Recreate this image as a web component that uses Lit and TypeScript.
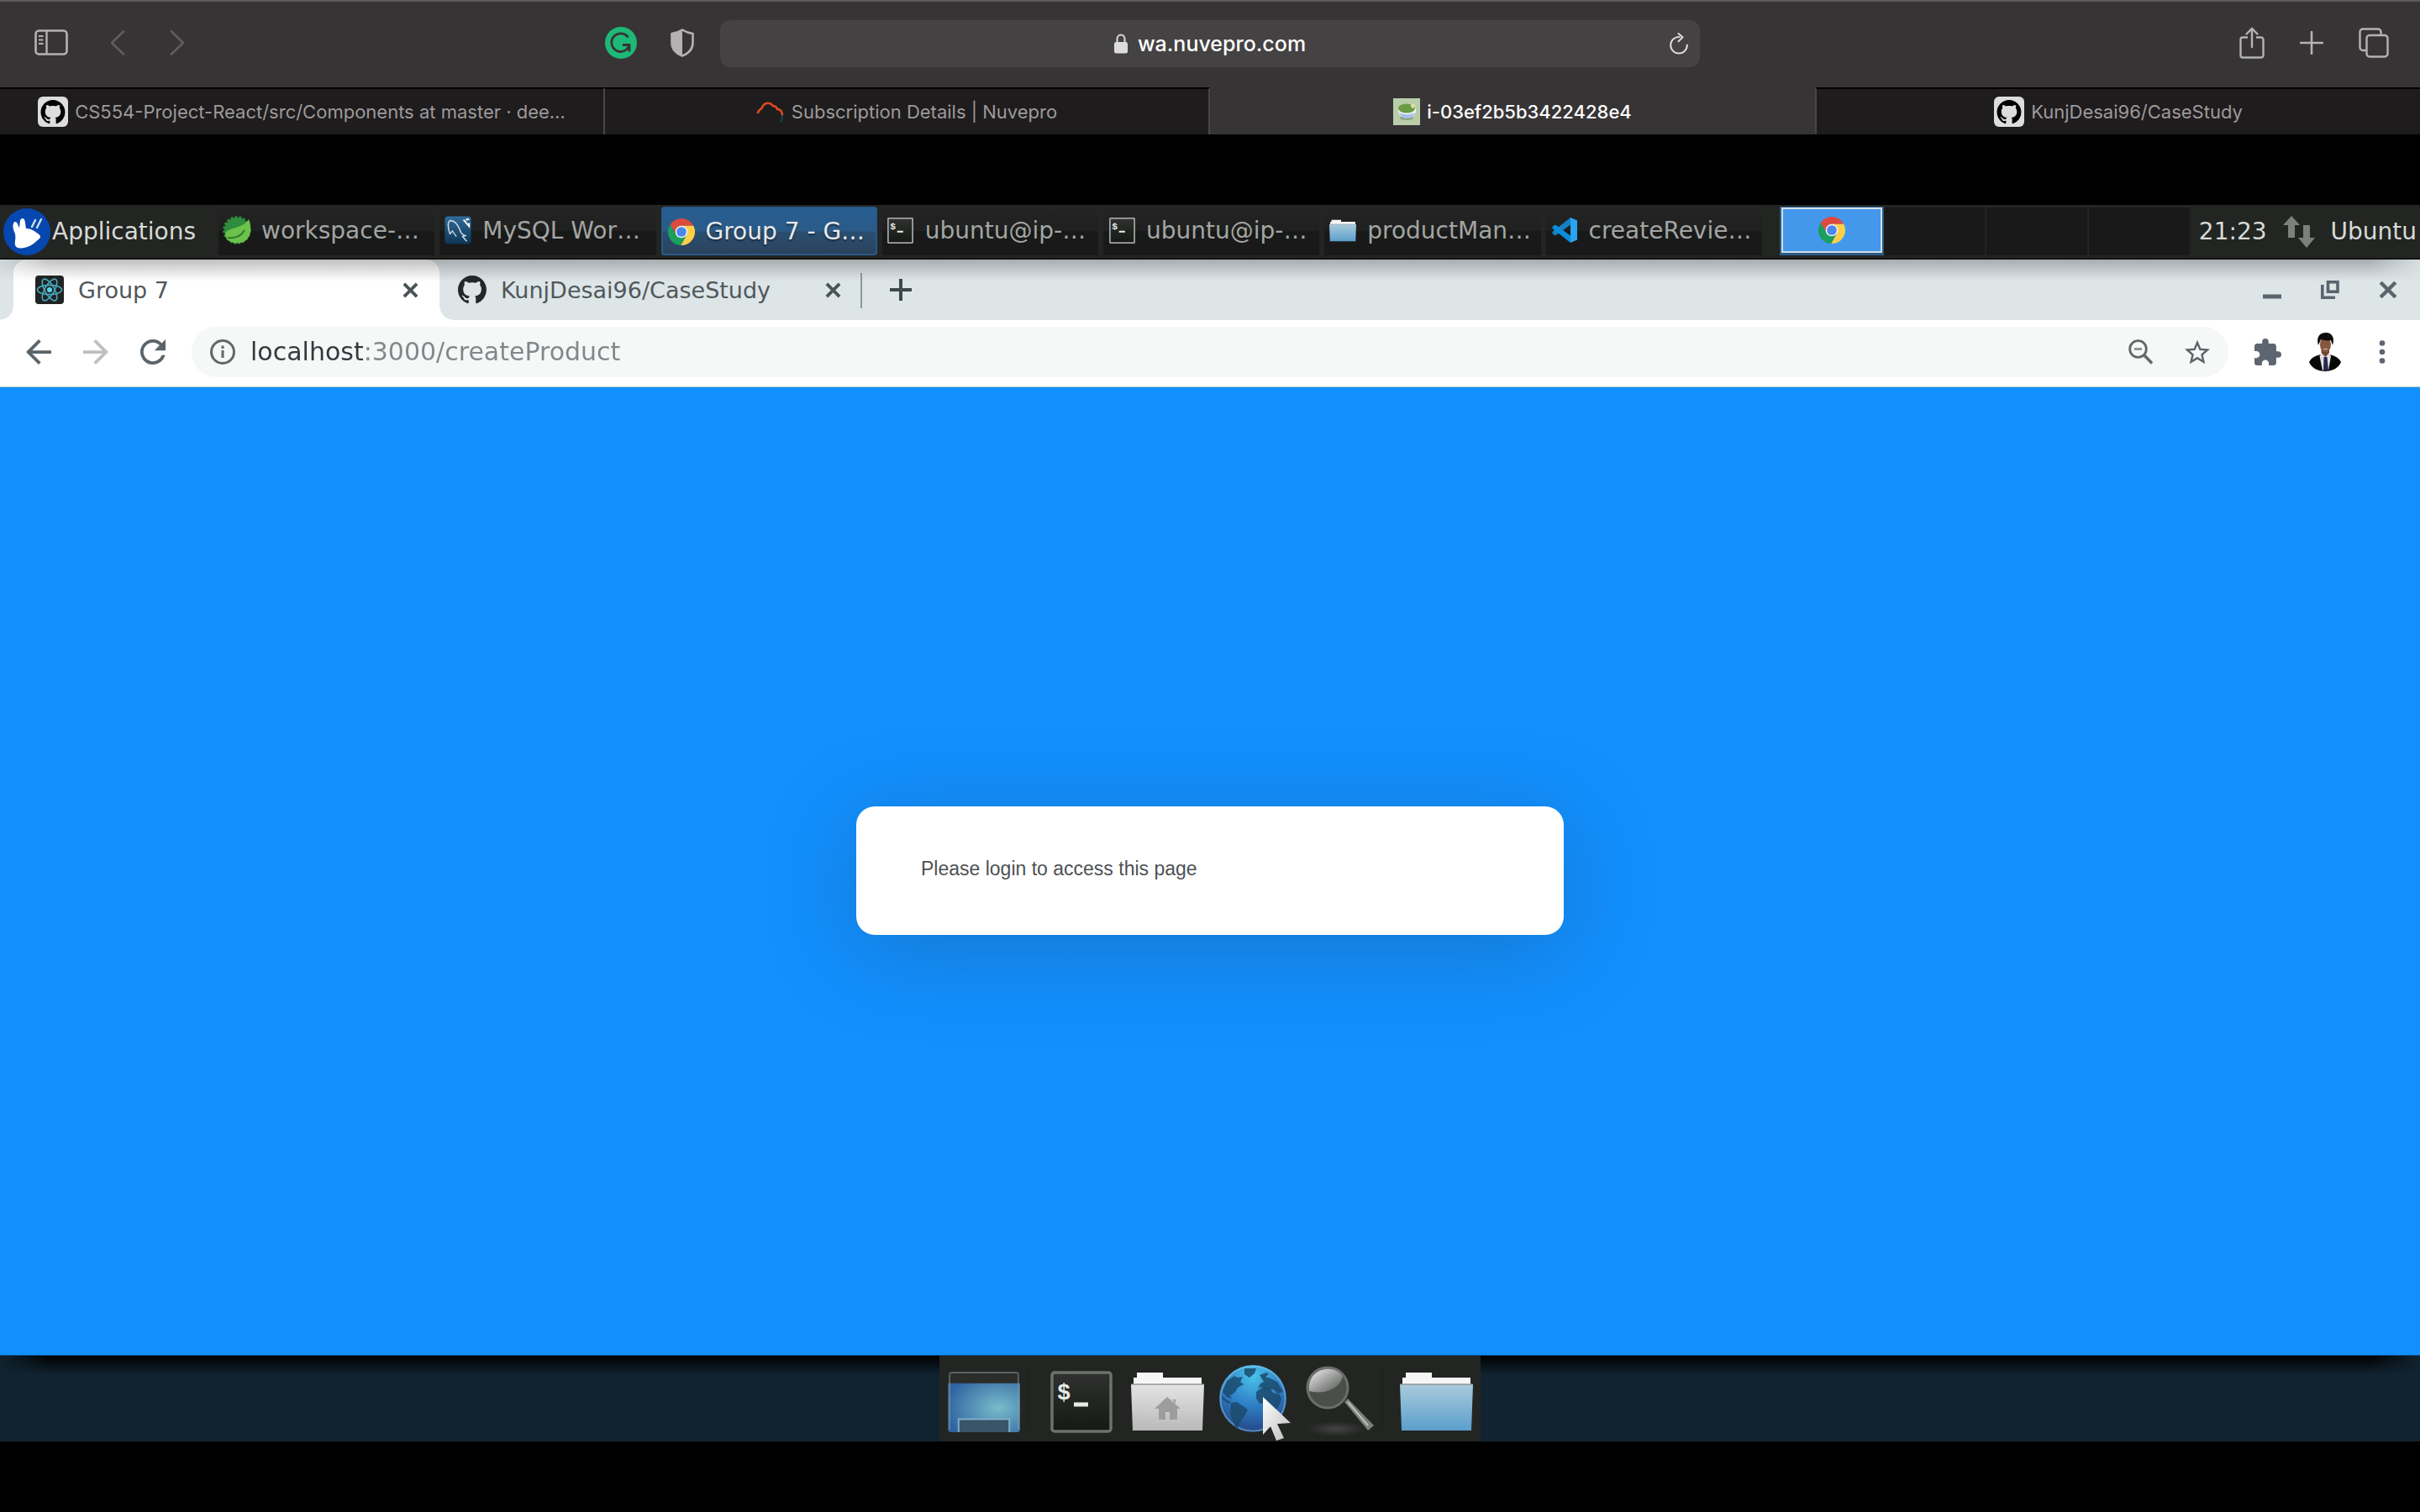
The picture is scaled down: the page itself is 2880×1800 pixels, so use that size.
import { LitElement, html, css, svg, TemplateResult } from "lit";
import { customElement } from "lit/decorators.js";
import { classMap } from "lit/directives/class-map.js";

const icon = (w: number, h: number, box: string, body: unknown) =>
  html`<svg class="icon" width=${w} height=${h} viewBox=${box} fill="none" aria-hidden="true">${body}</svg>`;

const OCTOCAT =
  "M8 0C3.58 0 0 3.58 0 8c0 3.54 2.29 6.53 5.47 7.59.4.07.55-.17.55-.38 0-.19-.01-.82-.01-1.49-2.01.37-2.53-.49-2.69-.94-.09-.23-.48-.94-.82-1.13-.28-.15-.68-.52-.01-.53.63-.01 1.08.58 1.23.82.72 1.21 1.87.87 2.33.66.07-.52.28-.87.51-1.07-1.78-.2-3.64-.89-3.64-3.95 0-.87.31-1.59.82-2.15-.08-.2-.36-1.02.08-2.12 0 0 .67-.21 2.2.82.64-.18 1.32-.27 2-.27.68 0 1.36.09 2 .27 1.53-1.04 2.2-.82 2.2-.82.44 1.1.16 1.92.08 2.12.51.56.82 1.27.82 2.15 0 3.07-1.87 3.75-3.65 3.95.29.25.54.73.54 1.48 0 1.07-.01 1.93-.01 2.2 0 .21.15.46.55.38A8.013 8.013 0 0 0 16 8c0-4.42-3.58-8-8-8z";

/* Safari toolbar */
const sidebar = icon(40, 32, "0 0 40 32", svg`
  <rect x="1.500" y="1.500" width="37" height="28" rx="4" stroke="#b4b2b3" stroke-width="2.600"/>
  <path d="M14.500 2V30" stroke="#b4b2b3" stroke-width="2.400"/>
  <path d="M5 8h5.500M5 12.500h5.500M5 17h5.500" stroke="#b4b2b3" stroke-width="2"/>`);
const chevronLeft = icon(18, 30, "0 0 18 30", svg`<path d="M16 1.500L2 15l14 13.500" stroke="#5f5d5e" stroke-width="2.600" stroke-linecap="round" stroke-linejoin="round"/>`);
const chevronRight = icon(18, 30, "0 0 18 30", svg`<path d="M2 1.500L16 15 2 28.500" stroke="#5f5d5e" stroke-width="2.600" stroke-linecap="round" stroke-linejoin="round"/>`);
const grammarly = icon(38, 38, "0 0 38 38", svg`
  <circle cx="19" cy="19" r="19" fill="#1eb877"/>
  <path d="M27.500 12.500A10.800 10.800 0 1 0 28.500 23" stroke="#363334" stroke-width="2.800"/>
  <path d="M21 21.500h8v8" stroke="#363334" stroke-width="2.800"/>`);
const shield = icon(28, 34, "0 0 28 34", svg`
  <path d="M14 1.500C10 4 6 5.500 1.500 6v11c0 7.500 5 12.500 12.500 15.500C21.500 29.500 26.500 24.500 26.500 17V6C22 5.500 18 4 14 1.500z" stroke="#b4b2b3" stroke-width="2.600" stroke-linejoin="round"/>
  <path d="M14 1.500C10 4 6 5.500 1.500 6v11c0 7.500 5 12.500 12.500 15.500z" fill="#b4b2b3"/>`);
const lock = icon(16, 24, "0 0 16 24", svg`
  <rect y="10" width="16" height="13.500" rx="2.500" fill="#dddcdc"/>
  <path d="M3.500 11V6.500a4.500 5 0 0 1 9 0V11" stroke="#dddcdc" stroke-width="2"/>`);
const reload = icon(24, 26, "0 0 24 26", svg`
  <path d="M12.500 5A9.800 9.800 0 1 0 21.800 14.500" stroke="#dddcdc" stroke-width="2" stroke-linecap="round"/>
  <path d="M11.500 1l5 4.200-5 5" stroke="#dddcdc" stroke-width="2" stroke-linecap="round" stroke-linejoin="round"/>`);
const share = icon(30, 38, "0 0 30 38", svg`
  <path d="M10 12.500H4a2.500 2.500 0 0 0-2.500 2.500v19A2.500 2.500 0 0 0 4 36.500h22a2.500 2.500 0 0 0 2.500-2.500V15a2.500 2.500 0 0 0-2.500-2.500h-6" stroke="#b4b2b3" stroke-width="2.400"/>
  <path d="M15 24V2M8.500 8.500L15 1.800l6.500 6.700" stroke="#b4b2b3" stroke-width="2.400" stroke-linecap="round" stroke-linejoin="round"/>`);
const plusThin = icon(28, 28, "0 0 28 28", svg`<path d="M14 1v26M1 14h26" stroke="#b4b2b3" stroke-width="2.600" stroke-linecap="round"/>`);
const overview = icon(36, 36, "0 0 36 36", svg`
  <path d="M9.500 27H5a3.500 3.500 0 0 1-3.500-3.500V5A3.500 3.500 0 0 1 5 1.500h18A3.500 3.500 0 0 1 26.500 5v4" stroke="#b4b2b3" stroke-width="2.400"/>
  <rect x="9.500" y="9" width="25" height="25.500" rx="3.500" stroke="#b4b2b3" stroke-width="2.400"/>`);

/* Safari favicons */
const githubTile = icon(36, 36, "0 0 36 36", svg`
  <rect width="36" height="36" rx="6" fill="#dddddd"/>
  <g transform="translate(3.500 4) scale(1.810)"><path d=${OCTOCAT} fill="#000"/></g>`);
const nuvepro = icon(34, 26, "0 0 34 26", svg`
  <path d="M2 15c0-5 4-4 5-7 2-6 9-7 13-2 2 1 4 0 5 4 5 0 6 4 6 8" stroke="#dc4a22" stroke-width="2.600"/>
  <path d="M31 17c0 3 0 5-2 8" stroke="#123f50" stroke-width="2.400"/>`);
const cup = icon(32, 32, "0 0 32 32", svg`
  <rect width="32" height="32" fill="#b9cda9"/>
  <ellipse cx="16" cy="23.500" rx="8" ry="2.500" fill="#8aa07c"/>
  <path d="M6 12h21c1 7-4 12-10.500 12S5 19 6 12z" fill="#eef3fb"/>
  <path d="M7 17c5 3 14 3 19 0-2 5-5 7-9.500 7S9 22 7 17z" fill="#a7c0e6"/>
  <ellipse cx="16" cy="12" rx="10" ry="5.500" fill="#6a9c42"/>
  <ellipse cx="23.500" cy="9" rx="2.500" ry="2.800" fill="#e6d8a4"/>`);

/* Xfce panel */
const xfce = icon(56, 56, "0 0 56 56", svg`
  <circle cx="28" cy="28" r="28" fill="#0647b0"/>
  <path d="M13 28c-3-7-1-12 1-12 3 0 3 4 5 7 1-6 0-11 4-11 3 0 3 6 4 12 6 0 10 3 14 6 3 2 4 4 2 6-4 3-6 6-12 9-7 3-15 4-17-1-1-4 2-10-1-16z" fill="#fff"/>
  <path d="M34 22l4-8M40 23l5-10" stroke="#cddaf0" stroke-width="2.500" stroke-linecap="round"/>`);
const spring = icon(34, 34, "0 0 34 34", svg`
  <circle cx="17" cy="17" r="15" fill="#2f8c3c"/>
  <circle cx="17" cy="17" r="15.500" stroke="#2f8c3c" stroke-width="2.500" stroke-dasharray="3 2"/>
  <path d="M31 4c5 12 2 26-10 28C11 34 3 29 3 21c3-8 21-5 28-17z" fill="#6cc24a"/>
  <path d="M6 26c9 1 16-2 20-9" stroke="#2c7a2c" stroke-width="2"/>`);
const mysql = icon(34, 34, "0 0 34 36", svg`
  <defs><linearGradient id="my" x2="0" y2="1"><stop stop-color="#2f6d9c"/><stop offset="1" stop-color="#0f3553"/></linearGradient></defs>
  <rect x=".5" y=".5" width="33" height="35" rx="4" fill="url(#my)"/>
  <path d="M7 23c-3-8-3-16 0-17 7 0 10 6 13 13 1 3 3 5 6 6l-3 1 5 6" stroke="#c7d6e2" stroke-width="1.700"/>
  <path d="M7 23l3-4 5 7" stroke="#c7d6e2" stroke-width="1.500"/>
  <path d="M24 5l7 8V9M31 4l-4 1" stroke="#fff" stroke-width="2"/>`);
const chrome = icon(32, 32, "4 4 40 40", svg`
  <path d="M24 15H41.860A20 20 0 0 0 7.280 13.030L16.200 28.500z" fill="#dd4b3e"/>
  <path d="M24 15H41.860A20 20 0 0 1 22.860 43.970L31.800 28.500z" fill="#fdcf48"/>
  <path d="M31.800 28.500L22.860 43.970A20 20 0 0 1 7.280 13.030L16.200 28.500z" fill="#1a9f5c"/>
  <circle cx="24" cy="24" r="9.200" fill="#f1f1f1"/><circle cx="24" cy="24" r="7.300" fill="#4a88f0"/>`);
const terminal = (size: number) => icon(size, size, "0 0 74 74", svg`
  <defs><linearGradient id="tm" x2="0" y2="1"><stop stop-color="#303130"/><stop offset="1" stop-color="#151915"/></linearGradient></defs>
  <rect x="2" y="2" width="70" height="70" rx="3" fill="url(#tm)" stroke=${size < 40 ? "#a0a2a0" : "#6f716f"} stroke-width=${size < 40 ? 4.5 : 3.5}/>
  <text x="8" y="34" font-family="Liberation Mono, monospace" font-weight="700" font-size="27" fill="#e8ebe8">$</text>
  <path d="M28 40h17" stroke="#e8ebe8" stroke-width="5"/>`);
const folder = (w: number, h: number, tone: "blue" | "grey", extra: unknown = "") => icon(w, h, "0 0 87 71", svg`
  <defs>
    <linearGradient id="f-blue" x2="0" y2="1"><stop stop-color="#a9cbdc"/><stop offset="1" stop-color="#5b9fcc"/></linearGradient>
    <linearGradient id="f-grey" x2="0" y2="1"><stop stop-color="#e4e4e4"/><stop offset="1" stop-color="#b9b9b9"/></linearGradient>
  </defs>
  <path d="M3 16V7h4V1h31v6h46v9z" fill="#f6f6f6"/>
  <path d="M0 15h87l-2 55H2z" fill=${`url(#f-${tone})`}/>
  <path d="M.5 15h86" stroke="#8f9698" stroke-width="1.500"/>${extra}`);
const house = svg`
  <path d="M43 30L28 44h5v13h8V48h5v9h9V44h4z" fill="#9c9e9c"/><path d="M49 33h4v5z" fill="#9c9e9c"/>`;
const vscode = icon(30, 30, "0 0 30 30", svg`
  <path d="M22 0l8 3.500v23L22 30z" fill="#2aa4f0"/>
  <path d="M22 0v8.500L4 21.500l-3.500-2.200V17z" fill="#1580c6"/>
  <path d="M22 30v-8.500L4 8.500.5 10.700V13z" fill="#0c8ddb"/>`);
const updown = icon(38, 38, "0 0 38 38", svg`
  <path d="M10 0L0 11h6v15h8V11h6zM28 38l10-12h-6V11h-8v15h-6z" fill="#7c807d"/>`);

/* Chrome window */
const react = icon(34, 34, "0 0 34 34", svg`
  <rect width="34" height="34" rx="4" fill="#212322"/>
  <g stroke="#48a9bf" stroke-width="1.600">
    <ellipse cx="17" cy="17" rx="14.500" ry="5.600"/>
    <ellipse cx="17" cy="17" rx="14.500" ry="5.600" transform="rotate(60 17 17)"/>
    <ellipse cx="17" cy="17" rx="14.500" ry="5.600" transform="rotate(120 17 17)"/>
  </g><circle cx="17" cy="17" r="3" fill="#5fd0ea"/>`);
const octocat = icon(34, 34, "0 0 16 16", svg`<path d=${OCTOCAT} fill="#22282b"/>`);
const cross = (size: number, w: string, color: string) =>
  icon(size, size, "0 0 20 20", svg`<path d="M2 2l16 16M18 2L2 18" stroke=${color} stroke-width=${w}/>`);
const plusBold = icon(26, 26, "0 0 26 26", svg`<path d="M13 0v26M0 13h26" stroke="#3f484b" stroke-width="4"/>`);
const minimise = icon(22, 22, "0 0 22 22", svg`<path d="M0 19h22" stroke="#5a646d" stroke-width="5"/>`);
const restore = icon(22, 22, "0 0 22 22", svg`
  <rect x="8.500" y="1.750" width="11.500" height="11.500" stroke="#5a646d" stroke-width="3.600"/>
  <path d="M1.800 5v15.200H17" stroke="#5a646d" stroke-width="3.600"/>`);
const back = icon(30, 30, "4 4 16 16", svg`<path d="M20 11H7.830l5.590-5.590L12 4l-8 8 8 8 1.410-1.410L7.830 13H20v-2z" fill="#5a646b"/>`);
const forward = icon(30, 30, "4 4 16 16", svg`<path d="M12 4l-1.410 1.410L16.170 11H4v2h12.170l-5.580 5.590L12 20l8-8z" fill="#bcc1be"/>`);
const refresh = icon(30, 30, "4 4 16 16", svg`<path d="M17.650 6.350A7.958 7.958 0 0 0 12 4a8 8 0 1 0 7.730 10h-2.080A6 6 0 1 1 12 6c1.660 0 3.140.690 4.220 1.780L13 11h7V4l-2.350 2.350z" fill="#5a646b"/>`);
const info = icon(30, 30, "0 0 30 30", svg`
  <circle cx="15" cy="15" r="13.500" stroke="#60686a" stroke-width="3"/>
  <path d="M15 13v9M15 7.500v3.500" stroke="#60686a" stroke-width="3"/>`);
const zoomOut = icon(30, 30, "0 0 30 30", svg`
  <circle cx="11.500" cy="11.500" r="9.800" stroke="#60686a" stroke-width="2.800"/>
  <path d="M18.500 18.500L28 28.500" stroke="#60686a" stroke-width="3.400"/><path d="M7 11.500h9" stroke="#8a9092" stroke-width="2.800"/>`);
const star = icon(30, 30, "2 2 20 19", svg`<path d="M22 9.240l-7.190-.620L12 2 9.190 8.630 2 9.240l5.460 4.730L5.820 21 12 17.270 18.180 21l-1.630-7.030L22 9.240zM12 15.400l-3.760 2.270 1-4.280-3.320-2.880 4.380-.380L12 6.100l1.710 4.040 4.380.380-3.320 2.880 1 4.280L12 15.400z" fill="#5c6466"/>`);
const puzzle = icon(32, 32, "2 1 21 21", svg`<path d="M20.500 11H19V7c0-1.100-.9-2-2-2h-4V3.500a2.500 2.500 0 0 0-5 0V5H4c-1.100 0-1.990.9-1.990 2v3.800H3.500c1.490 0 2.700 1.210 2.700 2.700s-1.210 2.700-2.700 2.700H2V20c0 1.100.9 2 2 2h3.800v-1.500c0-1.490 1.210-2.700 2.700-2.700 1.490 0 2.700 1.210 2.700 2.700V22H17c1.100 0 2-.9 2-2v-4h1.500a2.500 2.500 0 0 0 0-5z" fill="#5d6670"/>`);
const avatar = icon(38, 46, "0 0 38 46", svg`
  <path d="M0 35c3-6 9-8 14-9h10c5 1 11 3 14 9-3 7-10 11-19 11S3 42 0 35z" fill="#070708"/>
  <path d="M14.500 25h9.500l2 3-3 17h-7l-3.500-17z" fill="#e4e0e2"/>
  <path d="M17.500 29h4l1.500 16h-6z" fill="#252b50"/>
  <path d="M14.500 18h9.500v6l-4.500 5-5-5z" fill="#6e4432"/>
  <ellipse cx="19.500" cy="14" rx="6.500" ry="9.500" fill="#87563f"/>
  <path d="M11 15C8 5 13 0 20 0s11 6 8 15l-2-6c-4 1-9 0-12-1z" fill="#0c0a0a"/>
  <path d="M17 19.500h5" stroke="#cdb5a8" stroke-width="1.200"/>`);
const kebab = icon(8, 28, "0 0 8 28", svg`<g fill="#5d6670"><circle cx="4" cy="3.500" r="3.300"/><circle cx="4" cy="14" r="3.300"/><circle cx="4" cy="24.500" r="3.300"/></g>`);

/* Dock */
const desktop = icon(90, 74, "0 0 90 76", svg`
  <defs>
    <radialGradient id="dk" cx=".7" cy=".5" r=".75"><stop stop-color="#79bccb"/><stop offset="1" stop-color="#2f64a0"/></radialGradient>
  </defs>
  <path d="M1 15h88v56q0 4-4 4H5q-4 0-4-4z" fill="url(#dk)"/>
  <path d="M3 15V5q0-3 3-3h78q3 0 3 3v10z" fill="#2b2d2b"/>
  <path d="M3 72V5q0-3 3-3h78q3 0 3 3v67" stroke="#8d9ca0" stroke-opacity=".5" stroke-width="2"/>
  <path d="M14 75V59h62v16z" fill="#3a5468"/><path d="M14 75V59h62v16" stroke="#7fb0c8" stroke-width="2"/>`);
const globe = icon(92, 92, "-4 0 92 92", svg`
  <defs>
    <radialGradient id="gl" cx=".5" cy=".15" r=".9"><stop stop-color="#49c4ea"/><stop offset=".5" stop-color="#2f7fc6"/><stop offset="1" stop-color="#22407f"/></radialGradient>
    <linearGradient id="cu" x2="1" y2="1"><stop stop-color="#fff"/><stop offset="1" stop-color="#bdbdbd"/></linearGradient>
  </defs>
  <circle cx="42" cy="42" r="40" fill="url(#gl)"/>
  <circle cx="42" cy="42" r="38.500" stroke="#8fd0ee" stroke-opacity=".45" stroke-width="2"/>
  <g fill="#1b4a6c" fill-opacity=".85">
    <path d="M6 34l5-13 9-6 4 2 6-1-3 6 4 3-7 4-3 5-5 4-2-1 3 5-6-2z"/>
    <path d="M32 6h14l-2 6-6 5-6-4z"/>
    <path d="M5 38l6 6 5 2-3 2-7-5z"/>
    <path d="M16 47l7-1 13 9-4 8-5 7-4 10-4-9-4-11z"/>
    <path d="M50 14l8-3 3 2-4 3 6 2 8 4 7 12-6 2-6-5-8 1-6-4-4 2 3-6 4-2z"/>
    <path d="M46 34l8-6 9 3 3 4 8 2 2 6-3 8-7 10-8-14-8 1-4-6z"/>
  </g>
  <path d="M54 40l33 31-16 1 8 17-9 3-7-17-9 10z" fill="url(#cu)"/>`);
const magnifier = icon(86, 86, "-4 0 86 86", svg`
  <defs>
    <linearGradient id="mg" x2="1" y2="1"><stop offset=".2" stop-color="#d0d0d0"/><stop offset=".6" stop-color="#8e908e"/><stop offset="1" stop-color="#555"/></linearGradient>
    <radialGradient id="ms"><stop stop-color="#444"/><stop offset="1" stop-color="#444" stop-opacity="0"/></radialGradient>
  </defs>
  <ellipse cx="36" cy="75" rx="36" ry="9" fill="url(#ms)"/>
  <path d="M46 43l4-4 31 32-7 6z" fill="#7c7e7c"/>
  <path d="M50 43l24 28" stroke="#bdbfbd" stroke-width="2"/>
  <circle cx="26" cy="26" r="24" fill="#4c4e4c" stroke="#6c6e6c" stroke-width="3"/>
  <path d="M4 30C2 10 18 2 30 4c8 1 12 5 14 9-5 17-25 21-40 17z" fill="url(#mg)"/>`);

interface Task { label: string; icon: TemplateResult; active?: boolean }

const TASKS: Task[] = [
  { label: "workspace-…", icon: spring },
  { label: "MySQL Wor…", icon: mysql },
  { label: "Group 7 - G…", icon: chrome, active: true },
  { label: "ubuntu@ip-…", icon: terminal(31) },
  { label: "ubuntu@ip-…", icon: terminal(31) },
  { label: "productMan…", icon: folder(32, 27, "blue") },
  { label: "createRevie…", icon: vscode },
];

const SAFARI_TABS: Task[] = [
  { label: "CS554-Project-React/src/Components at master · dee…", icon: githubTile },
  { label: "Subscription Details | Nuvepro", icon: nuvepro },
  { label: "i-03ef2b5b3422428e4", icon: cup, active: true },
  { label: "KunjDesai96/CaseStudy", icon: githubTile },
];

@customElement("app-root")
export class AppRoot extends LitElement {
  static styles = css`
    :host { display: flex; flex-direction: column; min-height: 100vh; background: #000; }
    *, *::before, *::after { box-sizing: border-box; }
    button, input { font: inherit; color: inherit; background: none; border: 0; padding: 0; margin: 0; outline: none; }
    button { display: flex; align-items: center; justify-content: center; flex: none; }
    .icon { display: block; flex: none; }

    .safari { font-family: Inter, "Liberation Sans", sans-serif; background: #373435; border-top: 2px solid #5c5a5b; }
    .safari-bar { display: grid; grid-template-columns: minmax(0, 1fr) 40.5% minmax(0, 1fr); align-items: center; height: 102px; padding-bottom: 2px; }
    .safari-side { display: flex; align-items: center; padding-bottom: 2px; }
    .safari-left { padding-left: 41px; padding-right: 31px; gap: 50px; }
    .safari-right { padding-right: 37px; gap: 42px; justify-content: flex-end; }
    .nav { display: flex; gap: 53px; }
    .ext { display: flex; align-items: center; gap: 40px; margin-left: auto; }
    .address { display: flex; align-items: center; height: 56px; padding: 0 13px 0 37px; border-radius: 12px; background: #444243; color: #fff; font-size: 25px; font-weight: 500; }
    .address-text { flex: 1; display: flex; align-items: center; justify-content: center; gap: 12px; }
    .address-text input { field-sizing: content; }
    .safari-tabs { display: grid; grid-template-columns: repeat(4, minmax(0, 1fr)); }
    .safari-tab { height: 56px; width: 100%; padding: 0 24px; gap: 8px; border-top: 2px solid #000; border-right: 2px solid #474546; background: #1f1c1d; color: #9c9a9b; font-size: 22px; white-space: nowrap; }
    .safari-tab.active { background: #373435; border-top-color: #373435; border-right: 0; color: #fff; font-weight: 500; }
    .safari-tab:last-child { border-right: 0; border-left: 2px solid #474546; }

    .remote { flex: 1; display: flex; flex-direction: column; padding: 84px 0; font-family: "DejaVu Sans", sans-serif; }
    .panel { display: flex; align-items: stretch; height: 65px; background: #222522; border-bottom: 2px solid #131413; color: #d8dad8; font-size: 28px; white-space: nowrap; }
    .menu { width: 260px; justify-content: flex-start; padding-left: 4px; gap: 2px; }
    .tasks { flex: 1; display: grid; grid-template-columns: repeat(7, minmax(0, 1fr)); gap: 6px; padding: 2px 23px 3px 0; }
    .task { justify-content: flex-start; padding: 0 5px 2px; gap: 12px; color: #a3a5a3; background: linear-gradient(#232623, #222222 20%, #1f201f 50%, #161a17 51%, #191919 65%); }
    .task.active { padding: 1px 5px 0; background: linear-gradient(#285e92, #2a5b88 50%, #2a4e70 52%, #2b435c); border: 2px solid #27598b; border-radius: 4px; color: #e6eaee; text-shadow: 0 2px 2px #1a2c3e; }
    .slot { display: flex; justify-content: center; flex: none; width: 34px; }
    .pager { display: grid; grid-template-columns: repeat(4, 120px); gap: 2px; padding: 3px 0; background: #222522; }
    .desk { background: #191919; height: 57px; width: 120px; }
    .desk.active { background: #4398ec; border: 2px solid #d4dde4; box-shadow: 0 1px 0 2px #285b85; height: 54px; }
    .tray { display: flex; align-items: center; gap: 19px; padding: 0 4px 0 11px; }

    .window { position: relative; flex: 1; display: flex; flex-direction: column; background: #fff; }
    .window::before { content: ""; position: absolute; inset: 0 0 auto; height: 26px; background: linear-gradient(rgba(20, 22, 24, .27), rgba(60, 50, 80, .05) 80%, transparent); -webkit-mask: linear-gradient(90deg, #0004, #000 60px calc(100% - 60px), #0002); pointer-events: none; z-index: 1; }
    .strip { display: flex; align-items: stretch; height: 72px; background: #dde5e7; color: #50585b; font-size: 27px; padding-left: 16px; }
    .tab { position: relative; display: flex; align-items: center; width: 507px; padding: 0 25px 0 26px; }
    .tab.other { width: 501px; padding: 0 23px 0 22px; }
    .tab .label { flex: 1; justify-content: flex-start; gap: 17px; }
    .tab.active { background: #fff; border-radius: 16px 16px 0 0; }
    .tab.active::before, .tab.active::after { content: ""; position: absolute; bottom: 0; width: 16px; height: 16px; }
    .tab.active::before { right: 100%; background: radial-gradient(circle at 0 0, transparent 15px, #fff 16px); }
    .tab.active::after { left: 100%; background: radial-gradient(circle at 100% 0, transparent 15px, #fff 16px); }
    .rule { width: 2px; height: 42px; margin-top: 16px; background: #8f999c; }
    .add { margin-left: 33px; }
    .controls { margin-left: auto; display: flex; align-items: center; gap: 47px; padding-right: 27px; }

    .toolbar { display: flex; align-items: center; height: 80px; padding: 0 41px 4px 31px; border-bottom: 1px solid #c9cccb; }
    .steps { display: flex; gap: 38px; padding-right: 31px; }
    .omnibox { flex: 1; display: flex; align-items: center; height: 60px; padding: 0 22px; border-radius: 30px; background: #f6f7f7; gap: 18px; }
    .omnibox input { flex: 1; min-width: 0; font-size: 30px; height: 40px; color: transparent; background: linear-gradient(90deg, #33393c 137px, #80888a 137px); -webkit-background-clip: text; background-clip: text; }
    .page-actions { display: flex; gap: 37px; }
    .tools { display: flex; align-items: center; gap: 33px; padding-left: 31px; }
    .tools .more { margin-left: 12px; }

    .page { flex: 1; display: flex; align-items: center; justify-content: center; padding-bottom: 2px; background: #1290ff; border-bottom: 1px solid #0b4f87; overflow: hidden; }
    .card { width: 842px; padding: 56px 77px 60px; border-radius: 22px; background: #fff; box-shadow: 0 18px 110px rgba(30, 45, 50, .25); font-family: "Liberation Sans", Arial, sans-serif; font-size: 23px; line-height: 37px; color: #4d5154; }
    .card p { margin: 0; }

    .desktop { display: flex; justify-content: center; height: 102px; background: #112330; position: relative; }
    .desktop::before { content: ""; position: absolute; inset: 0 0 auto; height: 22px; background: linear-gradient(#000, transparent); -webkit-mask: linear-gradient(90deg, transparent, #000 60px calc(100% - 60px), transparent); }
    .dock { position: relative; display: flex; align-items: center; padding: 0 2px; background: #222522; }
    .dock button { width: 102px; height: 102px; padding-top: 7px; }
    .sep { width: 14px; height: 68px; border-left: 2px solid #1d201d; }
  `;

  private safari() {
    return html`<header class="safari">
      <div class="safari-bar">
        <div class="safari-side safari-left">
          <button aria-label="Sidebar">${sidebar}</button>
          <div class="nav"><button aria-label="Back">${chevronLeft}</button><button aria-label="Forward">${chevronRight}</button></div>
          <div class="ext"><button aria-label="Grammarly">${grammarly}</button><button aria-label="Privacy report">${shield}</button></div>
        </div>
        <div class="address">
          <label class="address-text">${lock}<input type="text" aria-label="Address" size="13" .value=${"wa.nuvepro.com"} /></label>
          <button aria-label="Reload">${reload}</button>
        </div>
        <div class="safari-side safari-right">
          <button aria-label="Share">${share}</button><button aria-label="New tab">${plusThin}</button><button aria-label="Tab overview">${overview}</button>
        </div>
      </div>
      <nav class="safari-tabs">
        ${SAFARI_TABS.map((t) => html`<button class=${classMap({ "safari-tab": true, active: !!t.active })}>${t.icon}<span>${t.label}</span></button>`)}
      </nav>
    </header>`;
  }

  private panel() {
    return html`<div class="panel">
      <button class="menu">${xfce}<span>Applications</span></button>
      <div class="tasks">
        ${TASKS.map((t) => html`<button class=${classMap({ task: true, active: !!t.active })}><span class="slot">${t.icon}</span><span>${t.label}</span></button>`)}
      </div>
      <div class="pager">
        <button class="desk active" aria-label="Workspace 1">${chrome}</button>
        ${[2, 3, 4].map((n) => html`<button class="desk" aria-label="Workspace ${n}"></button>`)}
      </div>
      <div class="tray"><span>21:23</span>${updown}<span>Ubuntu</span></div>
    </div>`;
  }

  private browser() {
    return html`<section class="window">
      <div class="strip">
        <div class="tab active"><button class="label">${react}<span>Group 7</span></button><button aria-label="Close tab">${cross(19, "4", "#4a5356")}</button></div>
        <div class="tab other"><button class="label">${octocat}<span>KunjDesai96/CaseStudy</span></button><button aria-label="Close tab">${cross(19, "4", "#4a5356")}</button></div>
        <div class="rule"></div>
        <button class="add" aria-label="New tab">${plusBold}</button>
        <div class="controls">
          <button aria-label="Minimise">${minimise}</button><button aria-label="Restore">${restore}</button><button aria-label="Close">${cross(22, "4", "#5a646d")}</button>
        </div>
      </div>
      <div class="toolbar">
        <div class="steps">
          <button aria-label="Back">${back}</button><button aria-label="Forward">${forward}</button><button aria-label="Reload">${refresh}</button>
        </div>
        <div class="omnibox">
          ${info}<input type="text" aria-label="Address and search" .value=${"localhost:3000/createProduct"} />
          <div class="page-actions"><button aria-label="Zoom">${zoomOut}</button><button aria-label="Bookmark">${star}</button></div>
        </div>
        <div class="tools">
          <button aria-label="Extensions">${puzzle}</button><button aria-label="Profile">${avatar}</button><button class="more" aria-label="Menu">${kebab}</button>
        </div>
      </div>
      <main class="page"><div class="card"><p>Please login to access this page</p></div></main>
    </section>`;
  }

  render() {
    return html`${this.safari()}
      <div class="remote">
        ${this.panel()}${this.browser()}
        <div class="desktop">
          <div class="dock">
            <button aria-label="Show desktop">${desktop}</button><div class="sep"></div>
            <button aria-label="Terminal">${terminal(74)}</button>
            <button aria-label="Home">${folder(87, 71, "grey", house)}</button>
            <button aria-label="Web browser">${globe}</button>
            <button aria-label="Find">${magnifier}</button><div class="sep"></div>
            <button aria-label="Files">${folder(87, 71, "blue")}</button>
          </div>
        </div>
      </div>`;
  }
}
